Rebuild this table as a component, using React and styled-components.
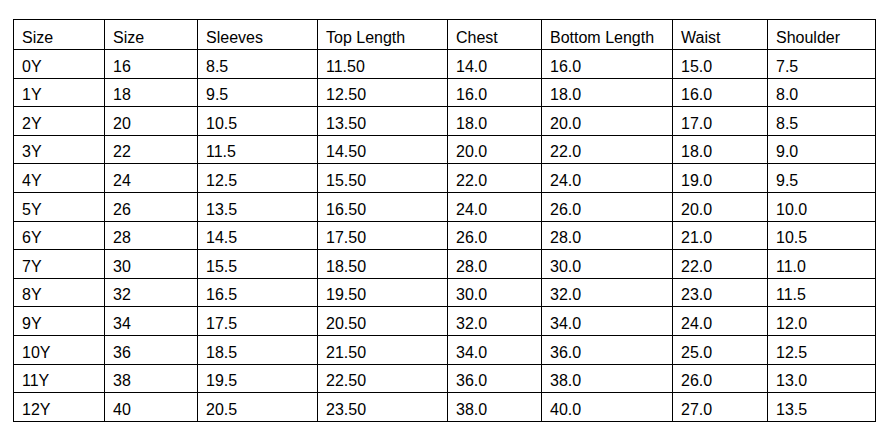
import styled, { createGlobalStyle } from 'styled-components';

const GlobalStyle = createGlobalStyle`
  body {
    margin: 0;
    background: #ffffff;
    font-family: "Liberation Sans", Arial, sans-serif;
  }
`

const Page = styled.div`
  padding: 19px 0 0 13px;
`

const SizeTable = styled.table`
  border-collapse: collapse;
  table-layout: fixed;
  width: 863px;
  color: #000;
  font-size: 16px;
`

const HeadRow = styled.tr`
  height: 30px;
`

const BodyRow = styled.tr`
  height: 28.6px;
`

const Cell = styled.td`
  border: 1px solid #000;
  padding: 0 4px 2px 8px;
  line-height: 18px;
  vertical-align: bottom;
  text-align: left;
  font-weight: normal;
  white-space: nowrap;
`

const widths = [91, 93, 120, 130, 94, 131, 95, 108];

const headers = ['Size', 'Size', 'Sleeves', 'Top Length', 'Chest', 'Bottom Length', 'Waist', 'Shoulder'];

const rows = [
    ['0Y', '16', '8.5', '11.50', '14.0', '16.0', '15.0', '7.5'],
    ['1Y', '18', '9.5', '12.50', '16.0', '18.0', '16.0', '8.0'],
    ['2Y', '20', '10.5', '13.50', '18.0', '20.0', '17.0', '8.5'],
    ['3Y', '22', '11.5', '14.50', '20.0', '22.0', '18.0', '9.0'],
    ['4Y', '24', '12.5', '15.50', '22.0', '24.0', '19.0', '9.5'],
    ['5Y', '26', '13.5', '16.50', '24.0', '26.0', '20.0', '10.0'],
    ['6Y', '28', '14.5', '17.50', '26.0', '28.0', '21.0', '10.5'],
    ['7Y', '30', '15.5', '18.50', '28.0', '30.0', '22.0', '11.0'],
    ['8Y', '32', '16.5', '19.50', '30.0', '32.0', '23.0', '11.5'],
    ['9Y', '34', '17.5', '20.50', '32.0', '34.0', '24.0', '12.0'],
    ['10Y', '36', '18.5', '21.50', '34.0', '36.0', '25.0', '12.5'],
    ['11Y', '38', '19.5', '22.50', '36.0', '38.0', '26.0', '13.0'],
    ['12Y', '40', '20.5', '23.50', '38.0', '40.0', '27.0', '13.5'],
];

const App = () => {
    return (
        <Page>
            <GlobalStyle />
            <SizeTable>
                <colgroup>
                    {widths.map((w, i) => <col key={i} style={{ width: w }} />)}
                </colgroup>
                <tbody>
                    <HeadRow>
                        {headers.map((h, i) => <Cell key={i}>{h}</Cell>)}
                    </HeadRow>
                    {rows.map((row) => (
                        <BodyRow key={row[0]}>
                            {row.map((v, i) => <Cell key={i}>{v}</Cell>)}
                        </BodyRow>
                    ))}
                </tbody>
            </SizeTable>
        </Page>
    );
}

export default App
